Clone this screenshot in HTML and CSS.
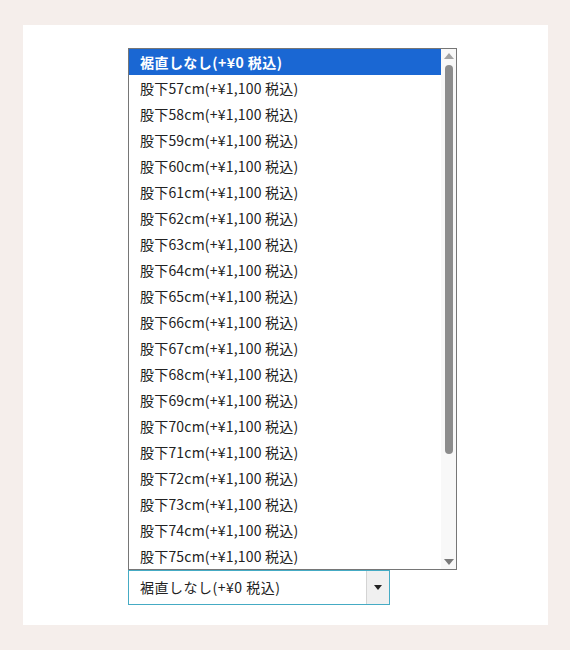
FILE: index.html
```html
<!DOCTYPE html>
<html lang="ja">
<head>
    <meta charset="UTF-8">
    <meta name="viewport" content="width=device-width, initial-scale=1.0">
    <link rel="stylesheet" href="styles.css">
</head>
<body>
<div class="card">
    <div class="picker">
        <div class="list">
            <div class="options">
                <div class="option selected">裾直しなし(+¥0 税込)</div>
                <div class="option">股下57cm(+¥1,100 税込)</div>
                <div class="option">股下58cm(+¥1,100 税込)</div>
                <div class="option">股下59cm(+¥1,100 税込)</div>
                <div class="option">股下60cm(+¥1,100 税込)</div>
                <div class="option">股下61cm(+¥1,100 税込)</div>
                <div class="option">股下62cm(+¥1,100 税込)</div>
                <div class="option">股下63cm(+¥1,100 税込)</div>
                <div class="option">股下64cm(+¥1,100 税込)</div>
                <div class="option">股下65cm(+¥1,100 税込)</div>
                <div class="option">股下66cm(+¥1,100 税込)</div>
                <div class="option">股下67cm(+¥1,100 税込)</div>
                <div class="option">股下68cm(+¥1,100 税込)</div>
                <div class="option">股下69cm(+¥1,100 税込)</div>
                <div class="option">股下70cm(+¥1,100 税込)</div>
                <div class="option">股下71cm(+¥1,100 税込)</div>
                <div class="option">股下72cm(+¥1,100 税込)</div>
                <div class="option">股下73cm(+¥1,100 税込)</div>
                <div class="option">股下74cm(+¥1,100 税込)</div>
                <div class="option">股下75cm(+¥1,100 税込)</div>
            </div>
            <div class="scrollbar">
                <div class="scroll-up"></div>
                <div class="thumb-track">
                    <div class="thumb"></div>
                </div>
                <div class="scroll-down"></div>
            </div>
        </div>
        <div class="select">
            <span class="select-value">裾直しなし(+¥0 税込)</span>
            <span class="select-arrow"></span>
        </div>
    </div>
</div>
</body>
</html>
```

FILE: styles.css
```css
body {
    margin: 0;
    background: #f5eeeb;
    font-family: "Noto Sans CJK JP", "Noto Sans", sans-serif;
    color: #222;
}
.card {
    margin: 25px 22px 25px 23px;
    height: 600px;
    background: #fff;
    padding: 23px 0 0 105px;
    box-sizing: border-box;
}
.picker {
    width: 329px;
}
.list {
    display: flex;
    height: 522px;
    border: 1px solid #767676;
    box-sizing: border-box;
}
.options {
    flex: 1;
}
.option {
    height: 26px;
    line-height: 26px;
    padding-left: 11px;
    font-size: 14px;
    letter-spacing: 0.2px;
    white-space: nowrap;
}
.option.selected {
    background: #1a67d3;
    color: #fff;
    font-weight: bold;
    letter-spacing: 0.45px;
}
.scrollbar {
    width: 15px;
    background: #f8f8f8;
    display: flex;
    flex-direction: column;
    align-items: center;
}
.scroll-up,
.scroll-down {
    width: 0;
    height: 0;
    border-left: 5px solid transparent;
    border-right: 5px solid transparent;
}
.scroll-up {
    margin-top: 4px;
    border-bottom: 6px solid #a3a3a3;
}
.scroll-down {
    margin-bottom: 4px;
    border-top: 6px solid #7a7a7a;
}
.thumb-track {
    flex: 1;
    width: 100%;
    display: flex;
    justify-content: center;
    padding-top: 6px;
}
.thumb {
    width: 8px;
    height: 389px;
    background: #8c8c8c;
    border-radius: 4px;
}
.select {
    display: flex;
    align-items: stretch;
    width: 262px;
    height: 35px;
    border: 1px solid #45abc4;
    box-sizing: border-box;
}
.select-value {
    flex: 1;
    padding-left: 11px;
    line-height: 33px;
    font-size: 14px;
    letter-spacing: 0.5px;
}
.select-arrow {
    width: 22px;
    background: #f0f0f0;
    border-left: 1px solid #d4d4d4;
    display: flex;
    align-items: center;
    justify-content: center;
}
.select-arrow::after {
    content: '';
    border-left: 4px solid transparent;
    border-right: 4px solid transparent;
    border-top: 5px solid #222;
}
```
